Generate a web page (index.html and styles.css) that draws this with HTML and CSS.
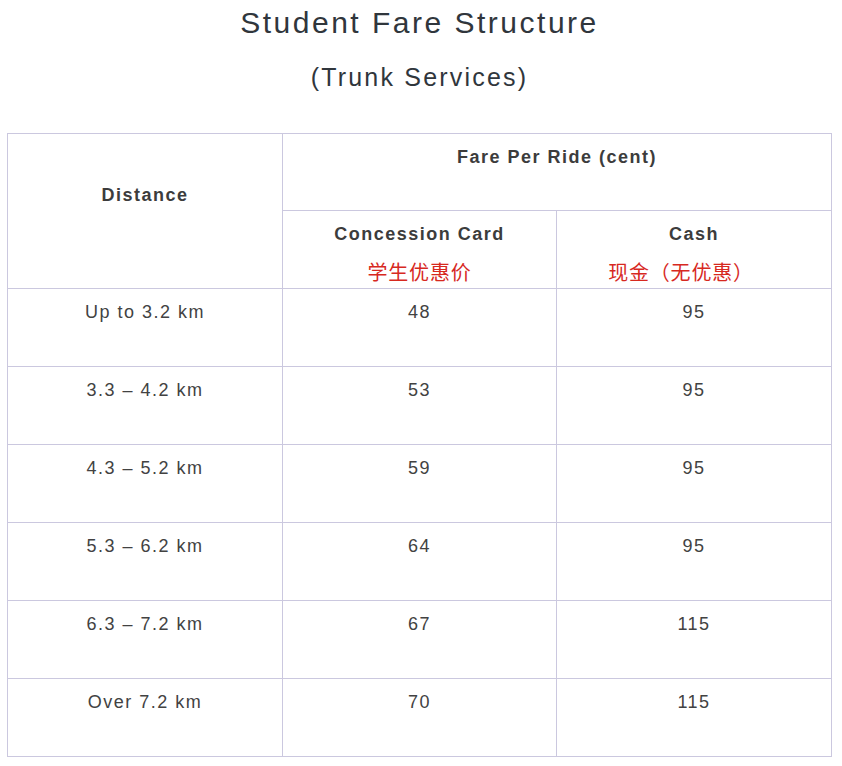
FILE: index.html
```html
<!DOCTYPE html>
<html lang="en">
<head>
<meta charset="utf-8">
<link rel="stylesheet" href="styles.css">
<title>Student Fare Structure</title>
</head>
<body>
<div class="page">
  <h1 class="title">Student Fare Structure</h1>
  <h2 class="subtitle">(Trunk Services)</h2>
  <table class="fares">
    <colgroup><col class="c1"><col class="c2"><col class="c3"></colgroup>
    <thead>
      <tr class="h1row">
        <th rowspan="2" class="dist"><span class="hd">Distance</span></th>
        <th colspan="2"><span class="hd">Fare Per Ride (cent)</span></th>
      </tr>
      <tr class="h2row">
        <th><span class="hd">Concession Card</span><span class="zh">学生优惠价</span></th>
        <th><span class="hd">Cash</span><span class="zh zh-cash">现金（无优惠）</span></th>
      </tr>
    </thead>
    <tbody>
      <tr><td>Up to 3.2 km</td><td>48</td><td>95</td></tr>
      <tr><td>3.3 – 4.2 km</td><td>53</td><td>95</td></tr>
      <tr><td>4.3 – 5.2 km</td><td>59</td><td>95</td></tr>
      <tr><td>5.3 – 6.2 km</td><td>64</td><td>95</td></tr>
      <tr><td>6.3 – 7.2 km</td><td>67</td><td>115</td></tr>
      <tr><td>Over 7.2 km</td><td>70</td><td>115</td></tr>
    </tbody>
  </table>
</div>
</body>
</html>
```
FILE: styles.css
```css
html, body {
  margin: 0;
  padding: 0;
  background: #fff;
}
.page {
  padding: 0 10px 0 7px;
  font-family: "Liberation Sans", Arial, "Noto Sans CJK SC", sans-serif;
}
.title {
  margin: 0;
  padding-top: 5px;
  height: 49px;
  text-align: center;
  font-weight: normal;
  font-size: 30px;
  line-height: 36px;
  letter-spacing: 2.5px;
  color: #30363c;
}
.subtitle {
  margin: 0;
  height: 79px;
  text-align: center;
  font-weight: normal;
  font-size: 25px;
  line-height: 46px;
  letter-spacing: 2.2px;
  color: #30363c;
}
.fares {
  width: 824px;
  border-collapse: collapse;
  table-layout: fixed;
  color: #424242;
  font-size: 18px;
  letter-spacing: 1.5px;
}
.c1 { width: 275px; }
.c2 { width: 274px; }
.c3 { width: 275px; }
.fares th, .fares td {
  border: 1px solid #cbc8df;
  text-align: center;
  vertical-align: top;
  padding: 9px 4px 0;
  line-height: 28px;
}
.h1row th { height: 67px; }
.h2row th { height: 68px; }
.fares th.dist { padding-top: 47px; }
.fares tbody td { height: 68px; }
.hd {
  display: block;
  font-weight: bold;
  color: #3c3c3c;
}
.zh {
  display: block;
  margin-top: 10px;
  font-family: "Noto Sans CJK SC", sans-serif;
  font-weight: normal;
  font-size: 20px;
  line-height: 28px;
  letter-spacing: 0.8px;
  color: #d7291f;
}
.zh-cash {
  padding-right: 26px;
}
```
